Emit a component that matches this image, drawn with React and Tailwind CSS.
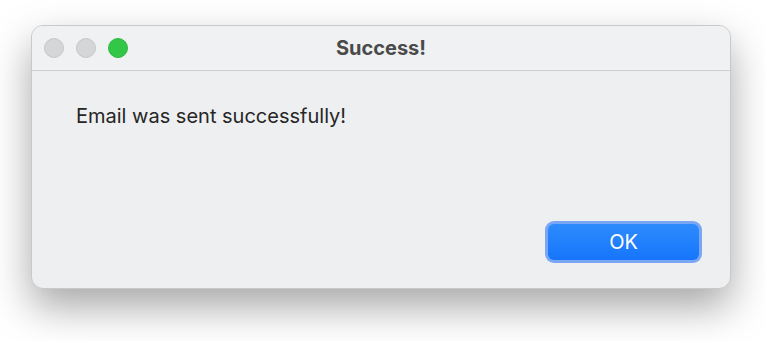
export default function App() {
  return (
    <div className="w-[765px] h-[341px] bg-white pt-[25px] pl-[31px]" style={{ fontFamily: 'Inter, "Liberation Sans", sans-serif' }}>
      {/* Dialog window */}
      <div className="w-[700px] h-[264px] rounded-[12px] border border-[#c9c9c9] bg-[#eeeff1] shadow-[0_18px_40px_rgba(0,0,0,0.35)] overflow-hidden flex flex-col">
        {/* Title bar */}
        <div className="relative h-[45px] flex items-center bg-[#eff1f2] border-b border-[#cfcfd0] px-[12px] gap-[12px]">
          <span className="w-[20px] h-[20px] rounded-full bg-[#d5d6d8] border border-[#c6c7c9]" />
          <span className="w-[20px] h-[20px] rounded-full bg-[#d5d6d8] border border-[#c6c7c9]" />
          <span className="w-[20px] h-[20px] rounded-full bg-[#33c748] border border-[#2fb843]" />
          <div className="absolute inset-0 flex items-center justify-center text-[20px] font-bold text-[#4a4a4a]">Success!</div>
        </div>
        {/* Body */}
        <div className="flex-1 flex flex-col px-[44px] pt-[30px]">
          <p className="text-[20px] text-[#262626]">Email was sent successfully!</p>
        </div>
        <div className="flex justify-end pr-[28px] pb-[25px]">
          <button className="w-[157px] h-[42px] rounded-[9px] bg-[#7aa6f4] p-[3px]">
            <span className="flex w-full h-full items-center justify-center rounded-[6px] bg-gradient-to-b from-[#2d8bfd] to-[#1675fb] text-white text-[20px]">OK</span>
          </button>
        </div>
      </div>
    </div>
  );
}
